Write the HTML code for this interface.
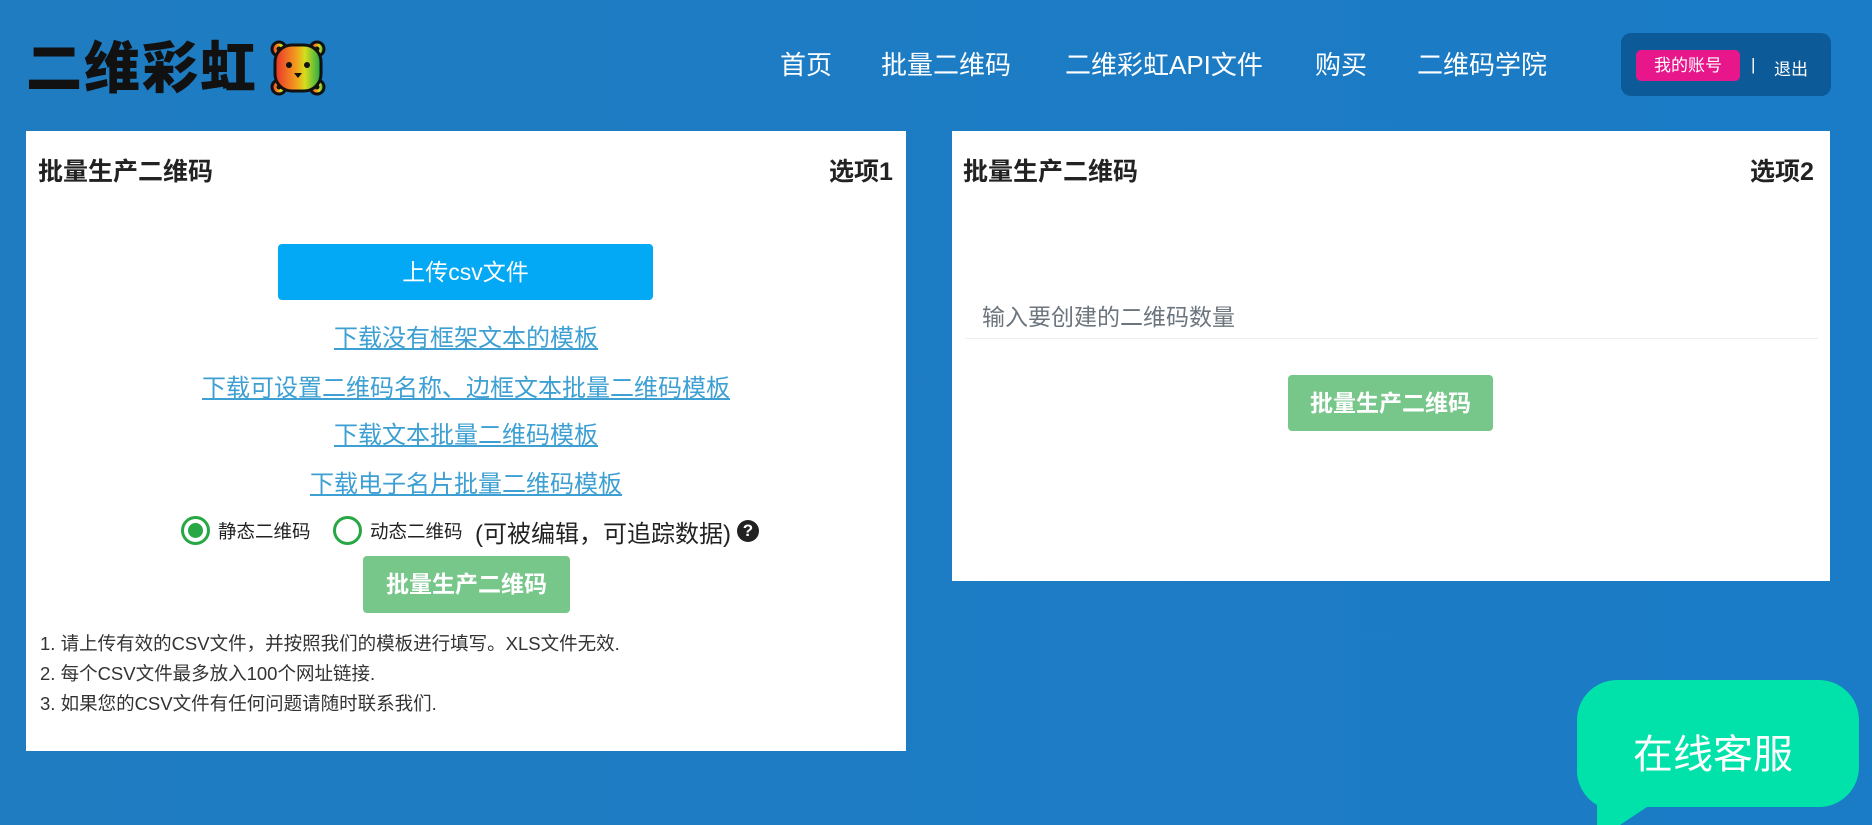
<!DOCTYPE html>
<html><head><meta charset="utf-8"><style>
*{margin:0;padding:0;box-sizing:border-box}
body{width:1872px;height:825px;overflow:hidden;background:linear-gradient(90deg,#1f7cc1,#1a7bc6);font-family:"Liberation Sans","Noto Sans CJK SC",sans-serif;position:relative}
.abs{position:absolute}
.logo{left:26px;top:36px;font-size:56px;font-weight:900;color:#111;letter-spacing:2px;line-height:66px}
.nav{top:48px;color:#fff;font-size:26px;line-height:34px}
.acct{left:1621px;top:33px;width:210px;height:63px;background:#0c5a98;border-radius:10px}
.card{background:#fff}
.title{font-size:25px;font-weight:bold;color:#222}
.btn{color:#fff;text-align:center;border-radius:4px}
.lnk{color:#3d9fd2;text-decoration:underline;font-size:24px;width:880px;text-align:center;left:26px}
.note{left:40px;font-size:18.5px;color:#333}
</style></head><body>
<div class="abs logo">二维彩虹</div>
<svg class="abs" style="left:270px;top:40px" width="56" height="56" viewBox="0 0 56 56">
<defs><linearGradient id="g" x1="0" x2="1"><stop offset="0" stop-color="#e8322a"/><stop offset=".45" stop-color="#f39a1e"/><stop offset=".65" stop-color="#d6de1c"/><stop offset="1" stop-color="#1fa84a"/></linearGradient></defs>
<g stroke="#111" stroke-width="3" fill="url(#g)">
<circle cx="9" cy="9" r="7"/><circle cx="47" cy="9" r="7"/><circle cx="9" cy="47" r="7"/><circle cx="47" cy="47" r="7"/>
<rect x="5" y="5" width="46" height="46" rx="17"/></g>
<g fill="#111"><circle cx="9" cy="9" r="2.5"/><circle cx="47" cy="9" r="2.5"/><circle cx="9" cy="47" r="2.5"/><circle cx="47" cy="47" r="2.5"/>
<circle cx="19" cy="25" r="3"/><circle cx="37" cy="25" r="3"/><path d="M24 33h8l-4 5z"/></g></svg>
<div class="abs nav" style="left:780px">首页</div>
<div class="abs nav" style="left:881px">批量二维码</div>
<div class="abs nav" style="left:1065px">二维彩虹API文件</div>
<div class="abs nav" style="left:1315px">购买</div>
<div class="abs nav" style="left:1417px">二维码学院</div>
<div class="abs acct"></div>
<div class="abs btn" style="left:1636px;top:50px;width:104px;height:31px;background:#e7168a;font-size:17px;line-height:31px;border-radius:5px">我的账号</div>
<div class="abs" style="left:1751px;top:55px;color:#fff;font-size:17px">|</div>
<div class="abs" style="left:1774px;top:55px;color:#fff;font-size:17px">退出</div>

<div class="abs card" style="left:26px;top:131px;width:880px;height:620px"></div>
<div class="abs title" style="left:38px;top:152px">批量生产二维码</div>
<div class="abs title" style="left:829px;top:152px">选项1</div>
<div class="abs btn" style="left:278px;top:244px;width:375px;height:56px;background:#03a9f4;font-size:23px;line-height:56px">上传csv文件</div>
<div class="abs lnk" style="top:318px">下载没有框架文本的模板</div>
<div class="abs lnk" style="top:368px">下载可设置二维码名称、边框文本批量二维码模板</div>
<div class="abs lnk" style="top:415px">下载文本批量二维码模板</div>
<div class="abs lnk" style="top:464px">下载电子名片批量二维码模板</div>
<div class="abs" style="left:181px;top:516px;width:29px;height:29px;border:3px solid #28a745;border-radius:50%"><div style="margin:4px;width:15px;height:15px;border-radius:50%;background:#28a745"></div></div>
<div class="abs" style="left:218px;top:518px;font-size:18.5px;color:#222">静态二维码</div>
<div class="abs" style="left:333px;top:516px;width:29px;height:29px;border:3px solid #28a745;border-radius:50%"></div>
<div class="abs" style="left:370px;top:518px;font-size:18.5px;color:#222">动态二维码</div>
<div class="abs" style="left:475px;top:514px;font-size:24px;color:#222">(可被编辑，可追踪数据)</div>
<div class="abs" style="left:737px;top:520px;width:22px;height:22px;border-radius:50%;background:#222;color:#fff;font-size:17px;font-weight:bold;text-align:center;line-height:22px">?</div>
<div class="abs btn" style="left:363px;top:556px;width:207px;height:57px;background:#77c68a;font-size:23px;font-weight:bold;line-height:57px">批量生产二维码</div>
<div class="abs note" style="top:630px">1. 请上传有效的CSV文件，并按照我们的模板进行填写。XLS文件无效.</div>
<div class="abs note" style="top:660px">2. 每个CSV文件最多放入100个网址链接.</div>
<div class="abs note" style="top:690px">3. 如果您的CSV文件有任何问题请随时联系我们.</div>

<div class="abs card" style="left:952px;top:131px;width:878px;height:450px"></div>
<div class="abs title" style="left:963px;top:152px">批量生产二维码</div>
<div class="abs title" style="left:1750px;top:152px">选项2</div>
<div class="abs" style="left:982px;top:298px;font-size:23px;color:#6c757d">输入要创建的二维码数量</div>
<div class="abs" style="left:965px;top:338px;width:853px;height:1px;background:#eee"></div>
<div class="abs btn" style="left:1288px;top:375px;width:205px;height:56px;background:#77c68a;font-size:23px;font-weight:bold;line-height:56px">批量生产二维码</div>

<svg class="abs" style="left:1577px;top:680px" width="282" height="145"><path d="M0 40a40 40 0 0 1 40-40h202a40 40 0 0 1 40 40v47a40 40 0 0 1-40 40H70l-30 20h-20v-22A40 40 0 0 1 0 87z" fill="#00e2a9"/></svg>
<div class="abs" style="left:1572px;top:722px;width:282px;text-align:center;color:#fff;font-size:40px">在线客服</div>
</body></html>
